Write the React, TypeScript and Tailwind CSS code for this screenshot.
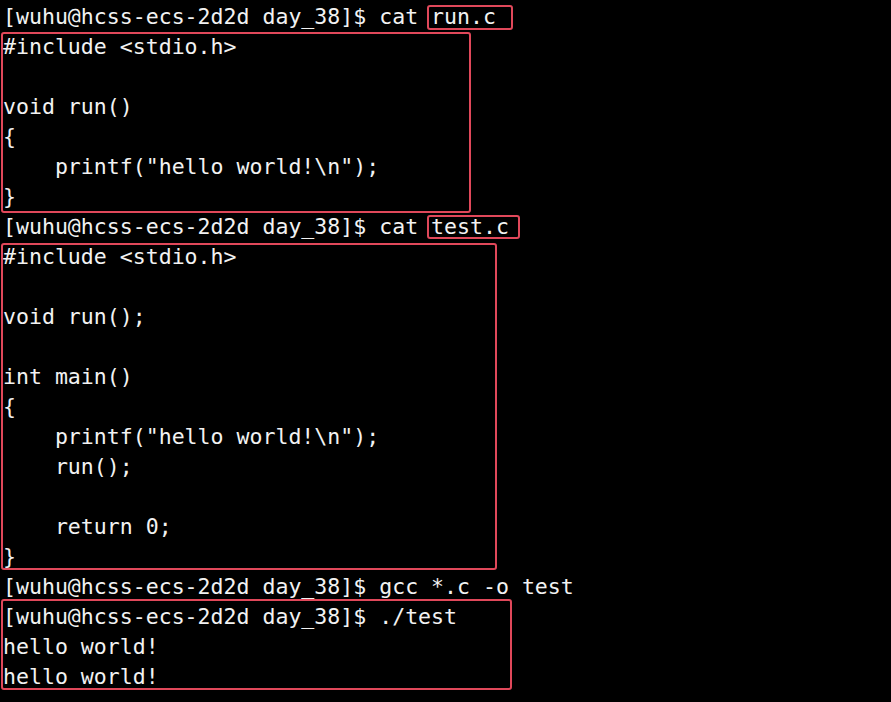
const lines = [
  "[wuhu@hcss-ecs-2d2d day_38]$ cat run.c",
  "#include <stdio.h>",
  "",
  "void run()",
  "{",
  "    printf(\"hello world!\\n\");",
  "}",
  "[wuhu@hcss-ecs-2d2d day_38]$ cat test.c",
  "#include <stdio.h>",
  "",
  "void run();",
  "",
  "int main()",
  "{",
  "    printf(\"hello world!\\n\");",
  "    run();",
  "",
  "    return 0;",
  "}",
  "[wuhu@hcss-ecs-2d2d day_38]$ gcc *.c -o test",
  "[wuhu@hcss-ecs-2d2d day_38]$ ./test",
  "hello world!",
  "hello world!",
];

export default function App() {
  return (
    <div className="relative w-[891px] h-[702px] overflow-hidden bg-black">
      <div
        className="pt-[2px] pl-[3px] text-[#f2f2f2] text-[21.55px] leading-[30px] whitespace-pre"
        style={{ fontFamily: '"DejaVu Sans Mono", monospace' }}
      >
        {lines.map((l, i) => (
          <div key={i} className="h-[30px]">{l || " "}</div>
        ))}
      </div>
      <div className="absolute left-[427px] top-[5px] w-[86px] h-[25px] border-2 border-[#e0485a] rounded-[3px]" />
      <div className="absolute left-[1px] top-[32px] w-[470px] h-[181px] border-2 border-[#e0485a] rounded-[3px]" />
      <div className="absolute left-[427px] top-[215px] w-[93px] h-[24px] border-2 border-[#e0485a] rounded-[3px]" />
      <div className="absolute left-[1px] top-[243px] w-[496px] h-[327px] border-2 border-[#e0485a] rounded-[3px]" />
      <div className="absolute left-[1px] top-[599px] w-[511px] h-[91px] border-2 border-[#e0485a] rounded-[3px]" />
    </div>
  );
}
